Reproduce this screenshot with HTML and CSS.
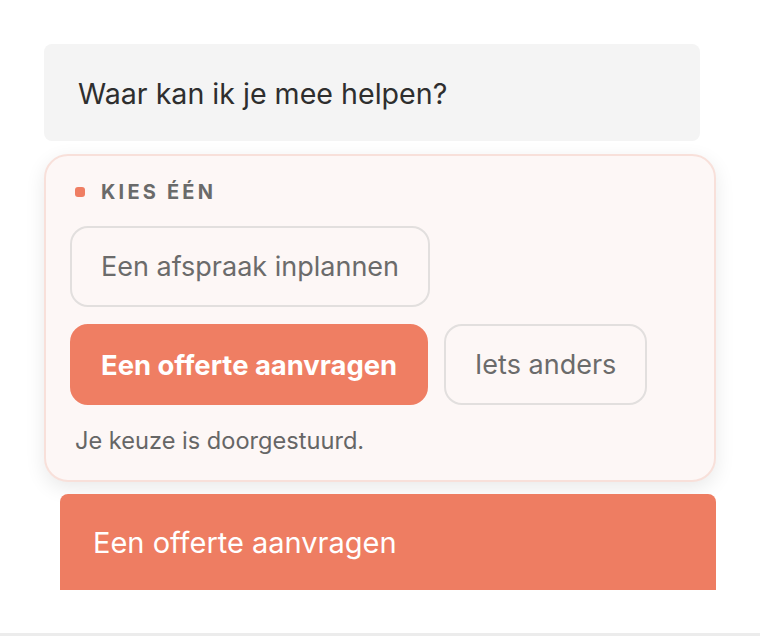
FILE: index.html
```html
<!DOCTYPE html>
<html lang="nl">
<head>
<meta charset="utf-8">
<title>Chat</title>
<link rel="stylesheet" href="styles.css">
</head>
<body>
<div class="page">
  <main class="thread">
    <div class="bubble">Waar kan ik je mee helpen?</div>
    <section class="choice-card">
      <div class="choice-label"><span class="dot"></span><span>KIES ÉÉN</span></div>
      <div class="options">
        <button class="opt">Een afspraak inplannen</button>
        <button class="opt opt-selected">Een offerte aanvragen</button>
        <button class="opt">Iets anders</button>
      </div>
      <p class="note">Je keuze is doorgestuurd.</p>
    </section>
    <div class="user-msg">Een offerte aanvragen</div>
  </main>
  <footer class="footer"></footer>
</div>
</body>
</html>
```
FILE: styles.css
```css
* { box-sizing: border-box; }
html, body { margin: 0; padding: 0; background: #ffffff; }
body { font-family: Inter, "Noto Sans", sans-serif; color: #2f2f2f; }
.page { height: 636px; display: flex; flex-direction: column; overflow: hidden; }
.thread {
  height: 590px;
  flex: none;
  overflow: hidden;
  padding: 44px 44px 0 44px;
  display: flex;
  flex-direction: column;
  width: 760px;
}
.thread > * { flex: none; }
.bubble {
  width: 656px;
  height: 97px;
  background: #f4f4f4;
  border-radius: 8px;
  padding: 2px 34px 0 34px;
  display: flex;
  align-items: center;
  font-size: 28.6px;
  color: #2e2e2e;
}
.choice-card {
  margin-top: 13px;
  width: 672px;
  background: #fdf7f6;
  border: 2px solid #f8e0da;
  border-radius: 24px;
  padding: 22px 24px 25px 24px;
  box-shadow: 0 6px 20px rgba(0,0,0,0.09);
}
.choice-label {
  display: flex;
  align-items: center;
  gap: 16px;
  margin-left: 5px;
  font-size: 20px;
  font-weight: 700;
  letter-spacing: 3.2px;
  color: #6a6a6a;
  height: 28px;
}
.dot { width: 10px; height: 10px; border-radius: 3px; background: #ef7e63; }
.options {
  margin-top: 20px;
  display: flex;
  flex-wrap: wrap;
  gap: 17px 16px;
  width: 620px;
}
.opt {
  font-family: inherit;
  font-size: 27px;
  color: #6b6b6b;
  background: transparent;
  border: 2px solid #e2dfde;
  border-radius: 18px;
  height: 81px;
  padding: 0 29px;
  cursor: pointer;
}
.opt-selected {
  background: #ef7e63;
  border-color: #ef7e63;
  color: #ffffff;
  font-weight: 700;
  font-size: 27.4px;
}
.options .opt:first-child { margin-right: 200px; }
.note {
  margin: 22px 0 0 5px;
  font-size: 23.6px;
  line-height: 28px;
  color: #666666;
}
.user-msg {
  margin-top: 12px;
  margin-left: 16px;
  width: 656px;
  height: 110px;
  background: #ee7d62;
  border-radius: 8px 8px 0 8px;
  color: #ffffff;
  font-size: 29px;
  line-height: 36px;
  padding: 31px 33px;
}
.footer { margin-top: auto; height: 3px; background: #ececec; }
```
